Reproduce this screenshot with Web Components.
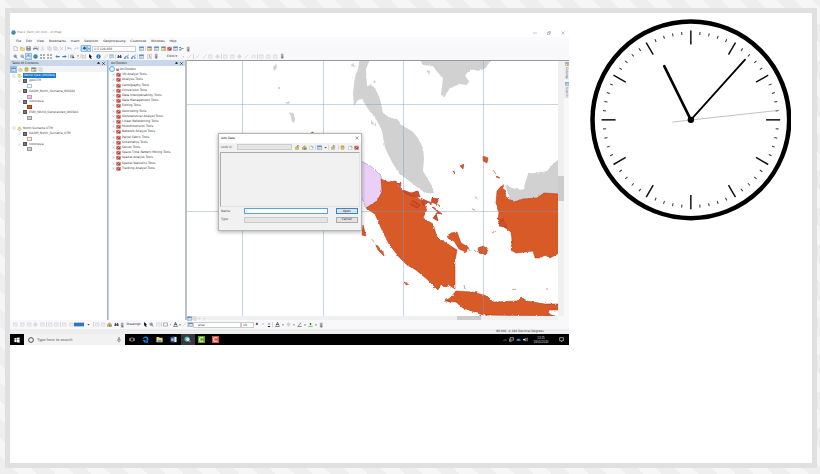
<!DOCTYPE html>
<html lang="en">
<head>
<meta charset="utf-8">
<title>ArcMap session with clock</title>
<style>
body{margin:0;padding:8px 3px 6px 5px;min-height:100vh;box-sizing:border-box;display:flex;
background:repeating-linear-gradient(45deg,#eeeeee 0 13px,#f6f6f6 13px 26px);
font:3px/5px "DejaVu Sans",sans-serif;color:#333}
</style>
</head>
<body>
<stage-frame>
  <desktop-window></desktop-window>
  <analog-clock slot="side"></analog-clock>
</stage-frame>
<script>
const BASE=`*{box-sizing:border-box}button,input,select{font:inherit;color:inherit;margin:0;padding:0;border:0;background:none;border-radius:0;min-width:0}
button{display:flex;align-items:center;justify-content:center}svg{display:block}a{color:inherit;text-decoration:none}select{appearance:none}`;
function define(name,css,html,setup){
  customElements.define(name,class extends HTMLElement{
    connectedCallback(){
      if(this.shadowRoot)return;
      const root=this.attachShadow({mode:'open'});
      root.innerHTML='<style>'+BASE+css+'</style>'+(typeof html==='function'?html(this):html);
      if(setup)setup(root,this);
    }
  });
}
const G={
new:'<path d="M3 1h7l4 4v10H3z" fill="#fff" stroke="#8a9099" stroke-width="1.5"/><path d="M10 1v4h4" fill="none" stroke="#8a9099"/>',
open:'<path d="M1 4h6l2 2h6v8H1z" fill="#e8c860" stroke="#a18a3c"/><path d="M3 8h13l-3 6H1z" fill="#f6dd85"/>',
save:'<path d="M2 2h12v12H2z" fill="#6b7686" stroke="#454d59"/><path d="M5 2h6v5H5z" fill="#eef2f7"/><path d="M5 10h6v4H5z" fill="#c5cdd8"/>',
print:'<path d="M4 2h8v5H4z" fill="#fff" stroke="#777"/><path d="M1 6h14v7H1z" fill="#75808c"/><path d="M4 10h8v4H4z" fill="#fff"/>',
cut:'<path d="M5 1l5 9M11 1L6 10" stroke="#c0c4ca" stroke-width="1.5"/><circle cx="5" cy="12" r="2.5" fill="none" stroke="#c0c4ca"/><circle cx="11" cy="12" r="2.5" fill="none" stroke="#c0c4ca"/>',
copy:'<path d="M2 2h8v9H2zM6 5h8v9H6z" fill="#f2f2f2" stroke="#bfc3c8" stroke-width="1.5"/>',
del:'<path d="M3 3l10 10M13 3L3 13" stroke="#b7bbc1" stroke-width="2"/>',
undo:'<path d="M5 3L2 7l4 3M2 7h8q4 0 4 5" fill="none" stroke="#6b9ccc" stroke-width="2"/>',
redo:'<path d="M11 3l3 4-4 3M14 7H6q-4 0-4 5" fill="none" stroke="#b6c2cf" stroke-width="2"/>',
add:'<path d="M1 8l7-4 7 4-7 4z" fill="#2c6ca8"/><path d="M8 1v8M4 5h8" stroke="#194a7c" stroke-width="2"/>',
table:'<path d="M1 2h14v12H1z" fill="#e9f1f9" stroke="#5e7f9f" stroke-width="1.5"/><path d="M1 3h14v3H1z" fill="#4c83b6"/><path d="M6 6v8M1 10h14" stroke="#7b9ab8"/>',
gold:'<path d="M1 2h14v12H1z" fill="#f2e3aa" stroke="#727b85" stroke-width="1.5"/><path d="M2 3h12v3H2z" fill="#537ea6"/><circle cx="11" cy="11" r="3" fill="#d8a52c"/>',
tool:'<path d="M2 4h12v10H2z" fill="#c33d32" stroke="#833"/><path d="M5 4V1h6v3M3 12L12 5" fill="none" stroke="#ddd" stroke-width="2"/>',
model:'<path d="M1 3h5v4H1zM1 10h5v4H1z" fill="#3482c4"/><path d="M6 5l4 4-4 3M10 8h5" fill="none" stroke="#45733c" stroke-width="2"/>',
grip:'<path d="M5 2h7v13H5z" fill="#a9a9aa"/><path d="M7 10h4l-2 3z" fill="#333"/>',
zin:'<circle cx="7" cy="7" r="4.5" fill="#edf2f7" stroke="#657586" stroke-width="1.5"/><path d="M7 4v6M4 7h6M10 10l4 5" stroke="#42566b" stroke-width="2"/>',
zout:'<circle cx="7" cy="7" r="4.5" fill="#edf2f7" stroke="#657586" stroke-width="1.5"/><path d="M4 7h6M10 10l4 5" stroke="#42566b" stroke-width="2"/>',
hand:'<path d="M4 15L1 8l3 1V3h2v5-6h2v6-5h2v6l2-4 2 1-3 9z" fill="#fff" stroke="#586876"/>',
globe:'<circle cx="8" cy="8" r="7" fill="#307fb3"/><path d="M3 5l5-2 1 5-4 2zM10 9l4-2-2 6z" fill="#65a86b"/>',
fix:'<path d="M2 6V2h4M10 2h4v4M14 10v4h-4M6 14H2v-4M2 2l4 4M14 2l-4 4M14 14l-4-4M2 14l4-4" fill="none" stroke="#535b64" stroke-width="1.7"/>',
left:'<path d="M1 8l6-5v3h8v4H7v3z" fill="#3c7fbd"/>',
right:'<path d="M15 8L9 3v3H1v4h8v3z" fill="#3c7fbd"/>',
sel:'<path d="M1 3h10v9H1z" fill="#a6d0d1" stroke="#4c808a"/><path d="M8 6l7 6-4 0-2 3z" fill="#222"/>',
drop:'<path d="M4 6h8l-4 5z" fill="#555"/>',
arrow:'<path d="M4 0l9 9-4 0 3 6-3 1-3-6-3 3z" fill="#111"/>',
info:'<circle cx="8" cy="8" r="7" fill="#2874b8"/><path d="M8 3v2M8 7v6" stroke="#fff" stroke-width="2"/>',
ruler:'<path d="M2 12L12 2l3 3L5 15z" fill="#f2f2f2" stroke="#aaa"/>',
note:'<path d="M1 2h14v9H8l-4 4v-4H1z" fill="#e9f2fa" stroke="#6b91ae" stroke-width="1.5"/><path d="M4 6h8" stroke="#487ba7" stroke-width="2"/>',
bino:'<path d="M3 3h3l1 4h2l1-4h3l2 10h-6v-3H7v3H1z" fill="#3f4e5c"/>',
path:'<path d="M2 14l4-8 4 3 4-7" stroke="#3473a9" stroke-width="2" fill="none"/><circle cx="3" cy="13" r="3" fill="#3f8ec4"/><path d="M9 10h6v5H9z" fill="#8a9aa8"/>',
time:'<path d="M1 1h14v14H1z" fill="#eef2f5" stroke="#7d8892"/><path d="M8 3v6l4 2" fill="none" stroke="#b35b38" stroke-width="2"/>',
g1:'<path d="M2 14L14 2" stroke="#c6c8cc" stroke-width="2"/>',
g2:'<path d="M2 3h11v10H2zM5 6h5" fill="none" stroke="#c6c8cc" stroke-width="1.7"/>',
g3:'<path d="M8 1v14M1 8h14M4 4h8v8H4z" fill="none" stroke="#c6c8cc" stroke-width="1.5"/>',
g4:'<path d="M3 13q-1-9 5-10t5 7l-4 3" fill="none" stroke="#c6c8cc" stroke-width="2"/>',
dot:'<circle cx="8" cy="8" r="2" fill="#bbb"/>',
blue:'<path d="M0 2h16v12H0z" fill="#2c78c5"/>',
rect:'<path d="M2 3h12v10H2z" fill="#fff" stroke="#555" stroke-width="1.5"/>',
A:'<path d="M3 12L8 1l5 11M5 8h6" fill="none" stroke="#222" stroke-width="2"/><path d="M1 15h14" stroke="#222" stroke-width="2"/>',
fill:'<path d="M3 7l5-5 5 5-5 5z" fill="#ddd" stroke="#777"/><path d="M1 15h14" stroke="#f3e39b" stroke-width="2"/>',
pen:'<path d="M3 12L12 2l2 2-9 9z" fill="#777"/><path d="M1 15h14" stroke="#222" stroke-width="2"/>',
mark:'<circle cx="8" cy="6" r="2.5" fill="#222"/><path d="M1 14h14" stroke="#6dec4b" stroke-width="4"/>',
up:'<path d="M1 7h10v7H1z" fill="#e6c054" stroke="#8d7740"/><path d="M9 1v7M5 5l4-4 4 4" stroke="#487a45" stroke-width="2" fill="none"/>',
home:'<path d="M1 8l7-6 7 6v6H1z" fill="#d7b455" stroke="#71643f"/><path d="M7 9h4v5H7z" fill="#4a7593"/>',
white:'<path d="M2 5h10v9H2z" fill="#fff" stroke="#789"/><path d="M7 2l7 7" stroke="#3e86bd" stroke-width="2"/>',
cyl:'<path d="M3 3q5-3 10 0v10q-5 3-10 0z" fill="#e5c253" stroke="#8b7b41"/><path d="M3 4q5 3 10 0" fill="none" stroke="#8b7b41"/>',
layer:'<path d="M1 6l7-4 7 4-7 4z" fill="#e4c95d"/><path d="M1 10l7 4 7-4" fill="none" stroke="#a99148" stroke-width="2"/>',
plus:'<path d="M3 3h10v10H3z" fill="#fff" stroke="#aaa"/><path d="M5 8h6M8 5v6" stroke="#666"/>',
minus:'<path d="M3 3h10v10H3z" fill="#fff" stroke="#aaa"/><path d="M5 8h6" stroke="#666"/>'
};
const ic=(n,s=5)=>`<svg viewBox="0 0 16 16" width="${s}" height="${s}" aria-hidden="true">${G[n]}</svg>`;

/* Items are "icon:width"; "|" draws a divider; other nodes arrive through the slot. */
define('tool-strip',`:host{display:flex;align-items:center;height:100%;flex:none}
button{height:7px}.hot{background:#c9e2f7;outline:1px solid #8cc0ea;outline-offset:-1px}i{width:1px;height:5px;background:#d3d5d9}`,
el=>el.getAttribute('items').trim().split(/\s+/).map(t=>{
 if(t==='|')return'<i></i>';
 const[n,w,h]=t.split(':');
 return`<button class="${h||''}" style="width:${w}px" aria-label="${n}">${ic(n,Math.min(n==='grip'?6:5,w))}</button>`}).join('')+'<slot></slot>');

define('menu-bar',`:host{display:flex;align-items:center;gap:5px;padding:0 6px;height:8px;background:#fafafc}button{color:#222}`,
['File','Edit','View','Bookmarks','Insert','Selection','Geoprocessing','Customize','Windows','Help'].map(t=>`<button>${t}</button>`).join(''));

define('panel-header',`:host{display:flex;align-items:center;height:6px;padding:0 2px;background:#c9d8ea;color:#222;gap:2px}span{flex:1}button{width:3px;color:#234}`,
`<span><slot></slot></span><button aria-label="Pin"><svg viewBox="0 0 8 8" width="3" height="3"><path d="M2 0h4v4h2v1H0V4h2zM4 5v3" fill="#234"/></svg></button><button aria-label="Close"><svg viewBox="0 0 8 8" width="3" height="3"><path d="M1 1l6 6M7 1L1 7" stroke="#123" stroke-width="2"/></svg></button>`);

const T=[['g','World View (WGS84)',1],['l','geoUTM'],['s','#fff','#9cc4ee'],['l','GADM_North_Sumatra_WGS84'],['s','#e8c8ee','#b79abd'],['l','Indonesia'],['s','#d9541c','#a83a10'],['l','ESRI_World_Generalized_WGS84'],['s','#d0d0d0','#999'],['b'],['g','North Sumatra UTM'],['l','GADM_North_Sumatra_UTM'],['s','#fbeee4','#c9a99a'],['l','Indonesia'],['s','#d0d0d0','#999']];
define('layer-tree',`:host{display:grid;grid-auto-rows:1fr;height:79px;margin-top:1px;white-space:nowrap;color:#444}
.r{display:flex;align-items:center;gap:1px;padding-left:2px}.l{padding-left:8px;gap:2px}.s{padding-left:17px}.s i{width:5px;height:4px;border:1px solid}
.on{background:#1979d4;color:#fff;padding:0 1px}input{appearance:none;width:4px;height:4px;border:1px solid #555;background:#777}label{display:flex;align-items:center;gap:2px}`,
T.map(([k,a,b])=>k==='b'?'<div></div>':k==='s'?`<div class="r s"><i style="background:${a};border-color:${b}"></i></div>`:k==='g'?`<div class="r">${ic('minus',4)}${ic('layer',5)}<span class="${b?'on':''}">${a}</span></div>`:`<div class="r l">${ic('minus',3)}<label><input type="checkbox" checked>${a}</label></div>`).join(''));

define('tool-list',`:host{display:grid;grid-auto-rows:1fr;height:105px;white-space:nowrap;color:#333}div{display:flex;align-items:center;gap:1px;padding-left:3px}div:first-of-type{padding-left:0}.busy{width:6px;height:6px;border:1px solid #55aaf0;border-radius:50%;background:#e4f3ff}`,
`<div><i class="busy"></i>${ic('tool',3)}ArcToolbox</div>`+['3D Analyst','Analysis','Cartography','Conversion','Data Interoperability','Data Management','Editing','Geocoding','Geostatistical Analyst','Linear Referencing','Multidimension','Network Analyst','Parcel Fabric','Schematics','Server','Space Time Pattern Mining','Spatial Analyst','Spatial Statistics','Tracking Analyst'].map(t=>`<div>${ic('plus',3)}${ic('tool',5)}<span>${t} Tools</span></div>`).join(''));

define('map-view',`:host{display:block}svg{width:100%;height:auto}`,
`<svg viewBox="187 60 371 255" role="img" aria-label="Map of Sumatra and Java">
<defs><filter id="c" x="-5%" y="-5%" width="110%" height="110%"><feTurbulence type="fractalNoise" baseFrequency=".28" numOctaves="2" seed="4"/><feDisplacementMap in="SourceGraphic" scale="2.5" xChannelSelector="R" yChannelSelector="G"/></filter></defs>
<path fill="#fff" d="M187 60h371v255H187z"/>
<g fill="#d1d1d1" filter="url(#c)">
<path d="M360 56L358 68 355 76 353 92 354 105 358 99 362 98 368 108 375 117 380 125 382 130 385 147 393 163 400 173 413 183 425 192 434 192 432 185 423 170 424 158 423 147 418 137 412 130 403 125 397 118 390 117 383 112 380 98 375 87 371 84 367 85 366 68 371 56z"/>
<path d="M418 56L423 64 433 65 438 72 443 77 441 94 445 95 450 87 460 83 467 84 469 80 465 75 470 68 478 70 484 68 494 56z"/>
<path d="M505 184L512 187 523 189 528 173 547 170 552 164 560 157V195L543 194 536 199 522 200 512 203z"/>
<path d="M273 66l3-3 1 4-3 3zM290 111l4 2 1 7-3 1zM371 119l3 4 2-1 0 3-5-2zM427 69l4 2-1 3-3-3zM373 83l3-2-2-2zM351 65l4 1-2-4zM351 77l3-2-2 2zM278 86h2v2h-2zM286 102l3-2 1 2-2 1z"/>
</g>
<g stroke="#ad2f1b" stroke-width=".5" fill="#d85a25" filter="url(#c)">
<path fill="#ebcff5" stroke="#958b9e" d="M355 158l8 3 9 5 9 9 2 15-6 10-11 7-12-29z"/>
<path d="M366 207l11-7 5-9-1-13 7 3 8-1 2 5 5 5 10 3 9 7 5 8-4 9 10 6 4 13 9 6 11 7-2 11 0 28-6-4-4 3-4-4-3 6-10-10-12-10-9-5-8-8-10-13-7-14-7-16z"/>
<path d="M456 290l17 1 14 4 6 6 24-1 4-4 6 4 18 3h13v6h-9l-1 4 7 2-72-1-20-7-7-6-11-1 5-3z"/>
<path d="M503 183l-6 7-1 12 3 9-1 8 6 7 7 5 1 9-1 9 5 3 9-1 8-1 2 7 5 0 5-3 5 3 9-5v-59l-15-1-7 5-14 1-9 3-8-5z"/>
<path d="M447 237l4-5 6-1 4 11 7 4-2 5-7-3-5-8zM478 247l5-2 5 3-2 6-7-2zM483 155l5 2-1 5-4-2zM460 165l4-2-1 5zM453 170l2 3-1-3zM363 224l3 11-4-1zM371 237l3 4M376 243l7 8 1 4-6-6zM405 281l4 2-3 1zM445 298l5 3-4-2zM493 169l3 4M497 175l3 2-4-1zM475 196l3 2M472 208l3 1M497 217l7 4 3 5-7-2zM492 232l4-2M512 289l4-1M546 288h2M464 284l1 4M312 131l2 1v2l-3-1zM468 246l2 4M474 249l2 2"/>
<path d="M403 189l8 3 7-2 2 6-8-1-7-3zM421 197l3 8 4-5 3 4 1-7 7 1-3 4 4 3M432 205l10 8-6-1 2 8-5-3 5-6-6-5M410 203l7 4 3-3-8-5M397 182l3 4 1-4M503 217l-4 8 7 1" fill="#d0502a" stroke="#a82a1c" stroke-width=".6"/>
</g>
<path d="M242.500 60v255M323.500 60v255M403.500 60v255M483.500 60v255M187 103.500h371M187 210.500h371" stroke="#7895cc" stroke-opacity=".42" fill="none"/>
</svg>`);

const pick=(label,v,cls)=>`<select aria-label="${label}" class="${cls}"><option>${v}</option></select>`;
define('add-data-dialog',`:host{display:grid;grid-template-rows:9px 9px 1fr 9px 8px 6px;background:#f1f1f1;border:1px solid #b5b5b5;box-shadow:0 1px 4px #0005;padding:0 1px;color:#444}
header{background:#fff;margin:0 -1px;padding:0 2px;display:flex;align-items:center;justify-content:space-between;color:#222}
.look{display:grid;grid-template-columns:17fr 56fr 68fr;align-items:center}.look tool-strip{justify-content:flex-end}
select{height:6px;border:1px solid #ccc;background:#e5e5e5}.list{border:1px solid #aaa;border-color:#aaa #e2e2e2 #e2e2e2 #aaa}
.f{display:grid;grid-template-columns:24fr 85fr 8fr 22fr 2fr;align-items:center}.f>button{grid-column:4;height:6px;background:#e2e2e2;border:1px solid #aaa;color:#222}.f>.ok{border-color:#3387ce}
input{height:6px;border:1px solid #5aa3df;background:#fff;padding:0 1px}.look label,.f label{padding-left:1px}`,
`<header><span>Add Data</span><button aria-label="Close"><svg viewBox="0 0 8 8" width="4" height="4"><path d="M1 1l6 6M7 1L1 7" stroke="#444"/></svg></button></header>
<div class="look"><label for="look">Look in:</label><select id="look"></select><tool-strip items="up:7 home:7 white:7 | table:7 drop:5 | up:9 | cyl:8 white:7 tool:6"></tool-strip></div>
<div class="list"></div>
<div class="f"><label for="nm">Name:</label><input id="nm" type="text" value="|"><button class="ok">Open</button></div>
<div class="f"><label for="ty">Type:</label><select id="ty"></select><button>Cancel</button></div>`);

define('task-bar',`:host{display:flex;align-items:stretch;height:11px;background:#000;color:#ddd}
button{width:14px}.search{flex:0 0 18%;background:#f2f2f2;display:flex;align-items:center;gap:3px;padding:0 4px;color:#555}input{flex:1;font:4px/5px "Liberation Sans",sans-serif;color:#555}input::placeholder{color:#555;opacity:1}
.on{background:#333a40}.sp{flex:1}.tray{display:flex;align-items:center}.tray button{width:7px}.time{width:24px;text-align:center;font:3px/4px "Liberation Sans",sans-serif}.tray .n{width:16px}`,
`<button aria-label="Start"><svg viewBox="0 0 16 16" width="6" height="6"><path d="M1 3l6-1v5H1zM8 2l7-1v6H8zM1 8h6v6l-6-1zM8 8h7v7l-7-1z" fill="#fff"/></svg></button>
<div class="search"><svg viewBox="0 0 8 8" width="6" height="6"><circle cx="4" cy="4" r="3.200" fill="none" stroke="#222"/></svg><input type="search" aria-label="Search" placeholder="Type here to search"><svg viewBox="0 0 8 10" width="4" height="6"><path d="M3 0h2v5H3zM1 4v2q3 3 6 0V4M4 7v3" fill="none" stroke="#555"/></svg></div>
<button aria-label="Task view"><svg viewBox="0 0 16 12" width="6" height="5"><path d="M4 2h8v8H4zM1 2v8M15 2v8" fill="none" stroke="#ccc" stroke-width="1.500"/></svg></button>
<button aria-label="Edge"><svg viewBox="0 0 16 16" width="7" height="7"><path d="M2 9h9q0-5-4-5-3 0-5 4Q2 1 8 1q7 0 7 9H6q2 4 8 1v3Q4 18 2 9z" fill="#1689e8"/></svg></button>
<button aria-label="Files"><svg viewBox="0 0 16 16" width="7" height="7"><path d="M1 2h6l1 2h7v10H1z" fill="#f5d46b"/><path d="M4 9h8v5H4z" fill="#4ba6de"/></svg></button>
<button aria-label="Word"><svg viewBox="0 0 16 16" width="7" height="7"><path d="M7 2h8v12H7z" fill="#e6edf7"/><path d="M1 2l9-1v14l-9-1z" fill="#2b579a"/><path d="M3 5l1 6 1.500-5L7 11l1-6" fill="none" stroke="#fff"/></svg></button>
<button class="on" aria-label="ArcMap"><svg viewBox="0 0 16 16" width="7" height="7"><circle cx="7" cy="7" r="6" fill="#4aa7cf"/><path d="M3 4l5-2v5l-4 3z" fill="#84c370"/><circle cx="9" cy="8" r="3" fill="#c3e7f7" stroke="#fff"/><path d="M11 10l4 4" stroke="#ccc" stroke-width="2"/></svg></button>
<button aria-label="Camtasia"><svg viewBox="0 0 16 16" width="7" height="7"><path d="M0 0h16v16H0z" fill="#62a51f"/><path d="M12 5V4H4v8h8v-1" fill="none" stroke="#fff" stroke-width="2"/></svg></button>
<button aria-label="Recorder"><svg viewBox="0 0 16 16" width="7" height="7"><path d="M0 0h16v16H0z" fill="#df4c3e"/><path d="M12 5V4H4v8h8v-1" fill="none" stroke="#fff" stroke-width="2"/></svg></button>
<span class="sp"></span><div class="tray">
<button aria-label="More"><svg viewBox="0 0 8 8" width="4" height="4"><path d="M1 6l3-3 3 3" fill="none" stroke="#ddd"/></svg></button>
<button aria-label="Display"><svg viewBox="0 0 8 8" width="5" height="5"><path d="M2 1h5v4H2zM1 3v4h3" fill="none" stroke="#ddd"/></svg></button>
<button aria-label="Cloud"><svg viewBox="0 0 8 8" width="5" height="5"><path d="M1 6q-1-3 2-3 2-2 3 1 2 0 1.500 2z" fill="#2c9bea"/></svg></button>
<button aria-label="Sound"><svg viewBox="0 0 8 8" width="5" height="5"><path d="M0 3h2l2-2v6L2 5H0z" fill="#ddd"/><path d="M5 2q2 2 0 4M6.500 1q2 3 0 6" fill="none" stroke="#aaa"/></svg></button>
<div class="time">13:25<br>16/01/2020</div>
<button class="n" aria-label="Notifications"><svg viewBox="0 0 8 8" width="5" height="5"><path d="M1 1h6v5H5L4 7.500V6H1z" fill="none" stroke="#ddd"/></svg></button></div>`);

define('desktop-window',`:host{display:block;position:relative;background:#f8f8fb;margin-top:15px}
.title{display:flex;align-items:center;height:9px;background:#fff;padding-left:1px;gap:1px;color:#888}.title span{flex:1}.title button{width:13px;color:#999}
.row{display:flex;align-items:center;padding-left:2px;overflow:hidden}.t1{height:7px}.t2{height:8px}
select{height:6px;border:1px solid #c9ccd1;background:#fff}.scale{width:44px;margin:0 1px;padding:0 1px}.ed{width:14px;color:#333;margin:0 1px 0 6px}
.main{display:grid;grid-template-columns:minmax(0,98fr) minmax(0,79fr) minmax(0,382fr)}
.pane{background:#fff;border-right:1px solid #aab4c2;overflow:hidden}.icons{height:6px;background:#f2f4f8}.box{border-right:2px solid #b9c0c9;border-left:1px solid #c9ced6}
.map{display:grid;grid-template-columns:minmax(0,1fr) 6px 5px;border-top:1px solid #999;align-content:start}
.v{background:#f0f0f0;display:grid;grid-template-rows:115fr 24fr 115fr}.v i{grid-row:2;background:#ccc}
.h{background:#f0f0f0;height:4px;display:grid;grid-template-columns:20px 250fr 24fr 77fr}.h i{grid-column:3;background:#ccc;height:4px}.h tool-strip{height:4px}
.tabs{display:flex;flex-direction:column;gap:1px;grid-row:span 2}.tabs button{writing-mode:vertical-rl;background:#eceef3;padding:1px 0;gap:1px;color:#555;width:5px}
.draw{height:9px}.draw .face{width:48px;padding-left:4px}.draw .size{width:13px;padding-left:1px}.draw .w{width:17px;color:#222}.draw .b{width:6px;color:#222}
.status{height:5px;background:#ededed;display:grid;grid-template-columns:486fr 73fr;white-space:nowrap}.status span{grid-column:2}
add-data-dialog{position:absolute;left:37.200%;top:33%;width:25.700%;height:31%}`,
`<div class="title">${ic('globe',5)}<span>Prac2_Palm_Oil.mxd - ArcMap</span><button aria-label="Minimize"><svg viewBox="0 0 8 8" width="4" height="4"><path d="M0 4h8" stroke="#888"/></svg></button><button aria-label="Restore"><svg viewBox="0 0 8 8" width="4" height="4"><path d="M1 3h4v4H1zM3 3V1h4v4H5" fill="none" stroke="#888"/></svg></button><button aria-label="Close"><svg viewBox="0 0 8 8" width="4" height="4"><path d="M1 1l6 6M7 1L1 7" stroke="#888"/></svg></button></div>
<menu-bar></menu-bar>
<div class="row t1"><tool-strip items="new:7 open:6 save:7 print:6 | cut:7 copy:6 copy:6 del:7 | undo:7 redo:7 | add:6:hot drop:4:hot"></tool-strip>${pick('Scale','1:5 129,856','scale')}<tool-strip items="table:8 | gold:7 table:7 gold:6 tool:6 table:6 model:7 grip:6"></tool-strip></div>
<div class="row t2"><tool-strip items="zin:7 zout:6 hand:7:hot globe:7 fix:7 fix:7 left:8 right:7 | sel:7 drop:4 copy:5 | arrow:8 info:8 ruler:6 note:7 | bino:7 path:7 path:7 | table:7 time:8 grip:6"></tool-strip><button class="ed">Editor▾</button><tool-strip items="dot:6 g1:7 | g1:7 g1:6 g2:7 g3:7 | g2:7 g2:7 g3:7 g1:7 g4:7 | g2:7 g2:7 g2:7 grip:6"></tool-strip></div>
<div class="main">
<section class="pane"><panel-header>Table Of Contents</panel-header><div class="icons"><tool-strip items="table:7:hot layer:6 cyl:7 gold:6 | copy:7"></tool-strip></div><layer-tree></layer-tree></section>
<section class="pane box"><panel-header>ArcToolbox</panel-header><tool-list></tool-list></section>
<section class="map"><map-view></map-view><div class="v"><i></i></div><div class="tabs"><button>${ic('gold',4)}Catalog</button><button>${ic('table',4)}Search</button></div><div class="h"><tool-strip items="table:5 copy:5 dot:5 dot:5"></tool-strip><i></i></div></section></div>
<div class="row draw"><tool-strip items="g2:7 g2:7 g2:6 g3:7 g2:7 | g2:6 g2:7 | g2:7 g2:6 blue:5 blue:5 drop:9 | g2:7 g2:5 home:7 bino:6 grip:6"></tool-strip><button class="w">Drawing▾</button><tool-strip items="arrow:6 zin:7 g2:6 | rect:7 drop:3 A:6 drop:4 g1:5 | table:5"></tool-strip>${pick('Font','Arial','face')}${pick('Size','10','size')}<button class="b"><b>B</b></button><button class="b"><i>I</i></button><button class="b"><u>U</u></button><tool-strip items="| A:8 drop:4 fill:7 drop:4 pen:7 drop:4 mark:7 drop:4 grip:6"></tool-strip></div>
<div class="status"><span>96.002 -2.194 Decimal Degrees</span></div>
<task-bar></task-bar>
<add-data-dialog role="dialog" aria-label="Add Data"></add-data-dialog>`);

define('analog-clock',`:host{display:block;padding-top:6px}svg{width:83%;height:auto;margin:0 auto}`,()=>{
 let t='';for(let i=0;i<60;i++)t+=i%5?`<path d="M0-88v3" stroke="#333" stroke-width="1" transform="rotate(${i*6})"/>`:`<path d="M0-89v14" stroke-width="1.500" transform="rotate(${i*6})"/>`;
 return`<svg viewBox="-100.500 -100.500 201 201" role="img" aria-label="Clock showing 11:07"><g stroke="#111" fill="none"><circle r="98" stroke="#000" stroke-width="4.500"/>${t}<path d="M-18.500 2.200L88-9.500" stroke="#999" stroke-width=".6"/><path d="M0 0L-26.500-53.500" stroke-width="2.600" stroke="#000" stroke-linecap="round"/><path d="M0 0L54-60" stroke-width="1.800" stroke="#000" stroke-linecap="round"/></g><circle r="3.200"/></svg>`});

define('stage-frame',`:host{flex:1;display:grid;grid-template-columns:minmax(0,559fr) minmax(0,243fr);align-items:start;background:#fff;border:5px solid #e0e0e0}`,
`<slot></slot><slot name="side"></slot>`);
</script>
</body>
</html>
